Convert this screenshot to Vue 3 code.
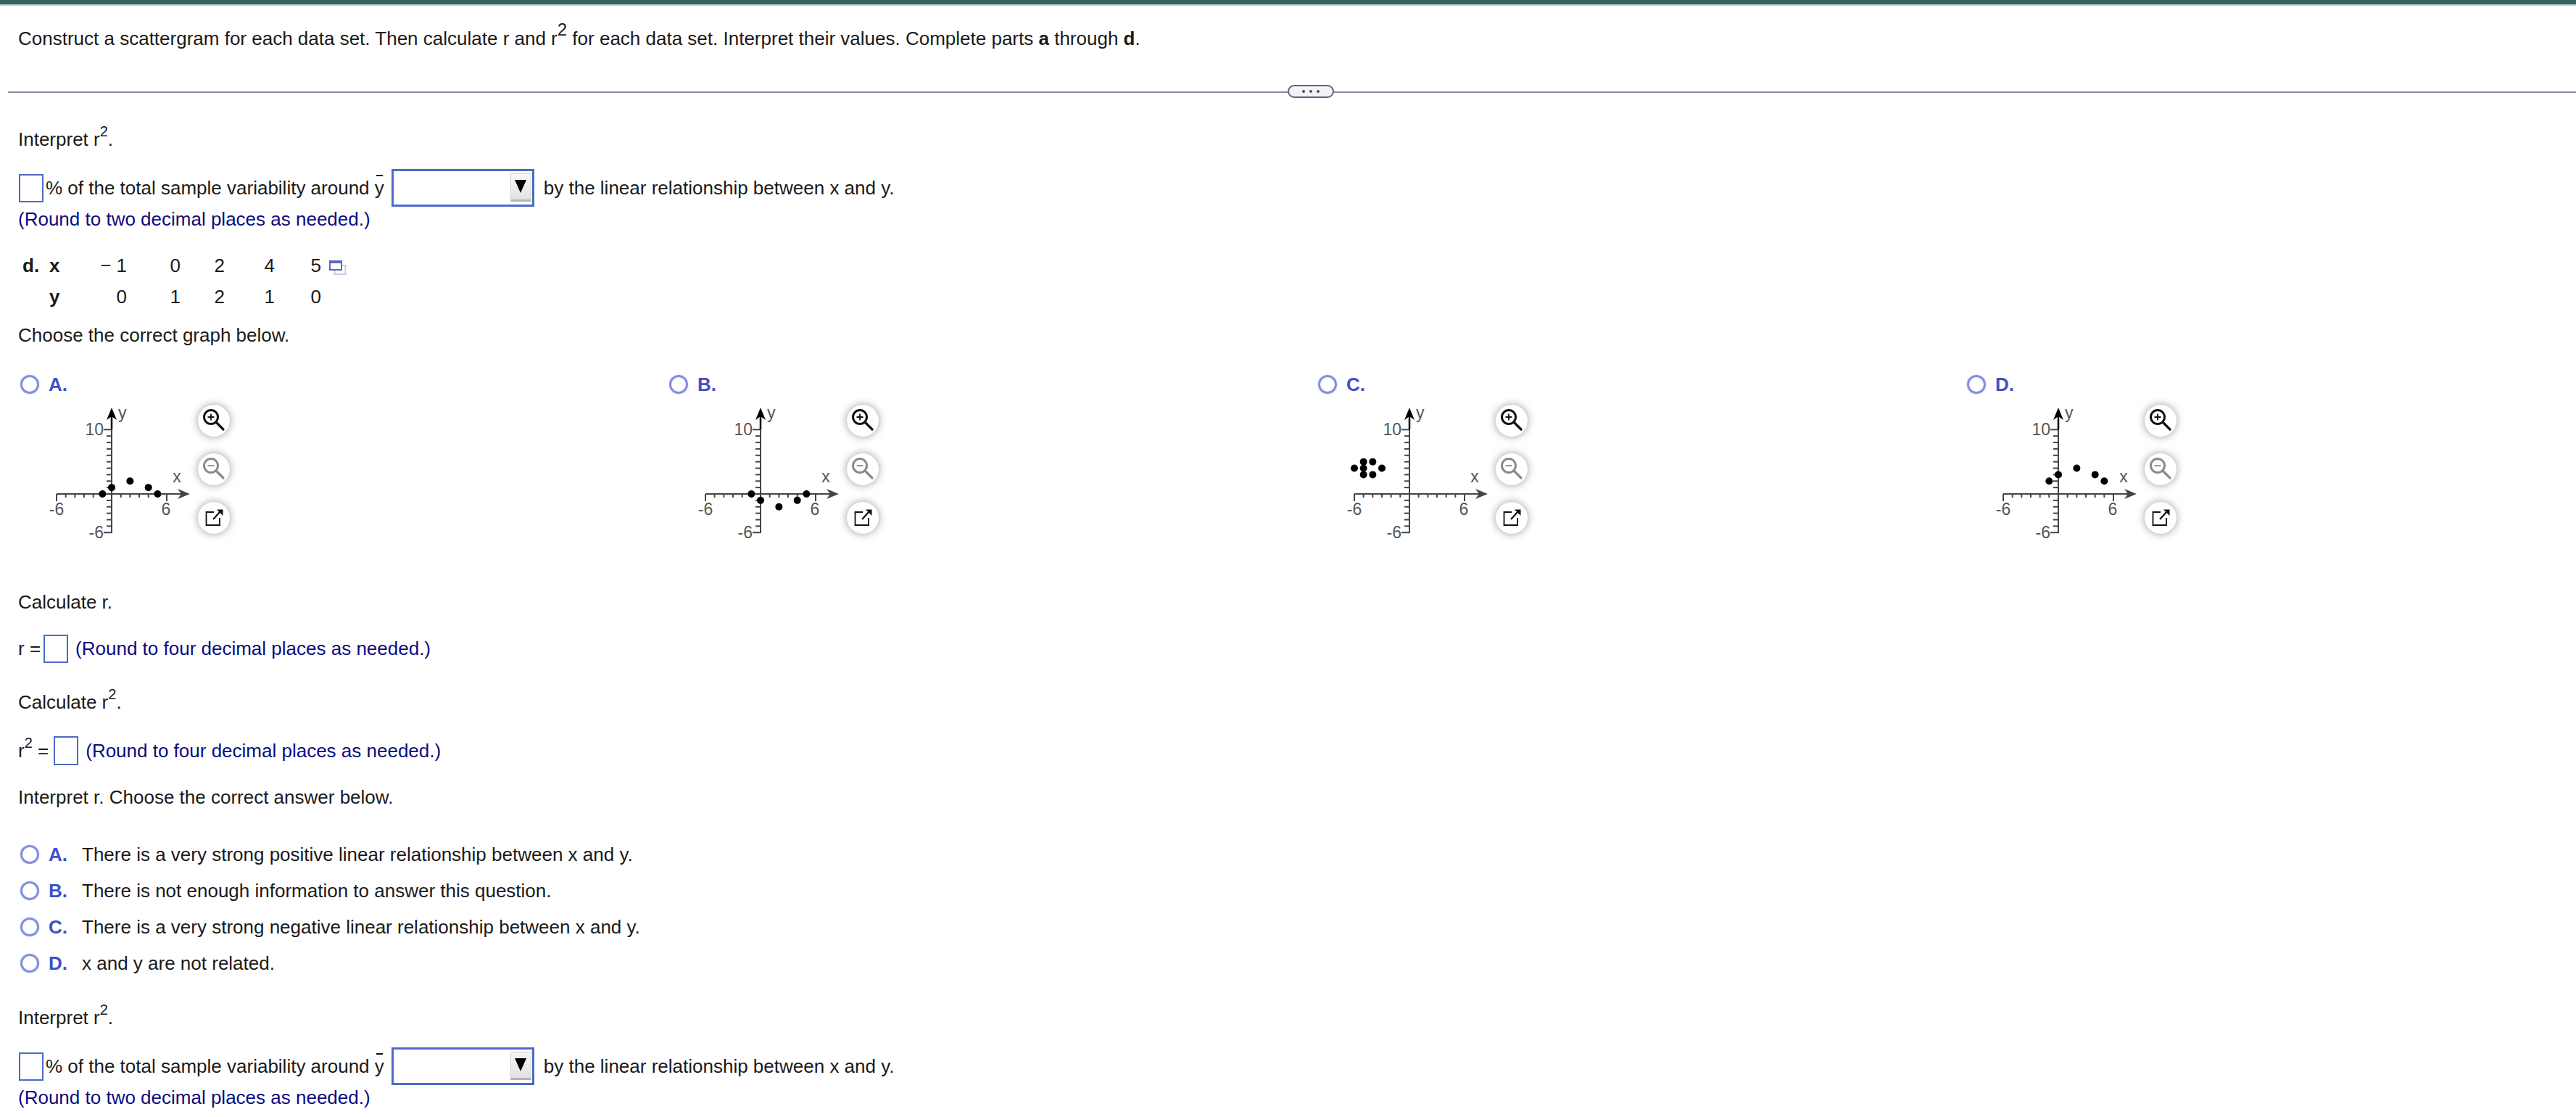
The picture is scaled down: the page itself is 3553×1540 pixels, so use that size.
<template>
  <div class="page">
    <div class="topbar"></div>
    <p class="line prompt">
      Construct a scattergram for each data set. Then calculate r and r<sup class="big">2</sup> for each data set. Interpret their values. Complete parts <b>a</b> through <b>d</b>.
    </p>
    <div class="rule">
      <div class="more"><i></i><i></i><i></i></div>
    </div>

    <div class="body">
      <p class="line interpret">Interpret r<sup>2</sup>.</p>
      <div class="fill-row">
        <input class="box" type="text" />
        <span class="after-box">% of the total sample variability around <span class="ybar">y</span></span>
        <div class="dropdown"><div class="drop-btn"><span class="tri"></span></div></div>
        <span>by the linear relationship between x and y.</span>
      </div>
      <p class="line hint">(Round to two decimal places as needed.)</p>

      <div class="data">
        <b class="part">d.</b>
        <b>x</b>
        <span class="num" v-for="v in xs" :key="'x' + v">{{ v }}</span>
        <svg class="copy" width="24" height="20" viewBox="0 0 24 20">
          <rect x="7.5" y="7" width="15" height="12" fill="#fff" stroke="#c6cbe6" stroke-width="2" />
          <rect x="1" y="1" width="16" height="12" fill="#fff" stroke="#5c6bb5" stroke-width="2" />
          <rect x="1" y="1" width="16" height="3" fill="#5c6bb5" />
        </svg>
        <span></span>
        <b>y</b>
        <span class="num" v-for="(v, i) in ys" :key="'y' + i">{{ v }}</span>
      </div>

      <p class="line choose">Choose the correct graph below.</p>
    </div>

    <div class="graphs">
      <div class="graph-col" v-for="g in graphs" :key="g.letter">
        <div class="graph-head">
          <span class="radio"></span>
          <b class="letter">{{ g.letter }}.</b>
        </div>
        <div class="graph-row">
          <svg class="plot" width="210" height="196" viewBox="0 -6 210 196">
            <g stroke="#444" stroke-width="2">
              <line v-for="t in xTicks" :key="'xt' + t" :x1="px(t)" y1="121" :x2="px(t)" :y2="t === -6 || t === 6 ? 131 : 126" />
              <line v-for="t in yTicks" :key="'yt' + t" x1="94" :y1="py(t)" :x2="t === 10 || t === -6 ? 83 : 87" :y2="py(t)" />
              <line x1="18" y1="121" x2="192" y2="121" />
              <line x1="94" y1="32" x2="94" y2="175" />
            </g>
            <line x1="94" y1="14" x2="94" y2="32" stroke="#000" stroke-width="2.5" />
            <path d="M94 2 L101 19 L94 14 L87 19 Z" fill="#000" />
            <path d="M202 121 L185 114 L190 121 L185 128 Z" fill="#444" />
            <text class="lbl" x="83" y="40" text-anchor="end">10</text>
            <text class="lbl" x="83" y="182" text-anchor="end">-6</text>
            <text class="lbl" x="18" y="150" text-anchor="middle">-6</text>
            <text class="lbl" x="169" y="150" text-anchor="middle">6</text>
            <text class="lbl" x="184" y="105" text-anchor="middle">x</text>
            <text class="lbl" x="103" y="17">y</text>
            <circle v-for="(p, i) in g.points" :key="i" :cx="px(p[0])" :cy="py(p[1])" r="5" fill="#000" />
          </svg>
          <div class="tools">
            <button class="tool">
              <svg width="44" height="44" viewBox="0 0 44 44" fill="none" stroke="#111">
                <circle cx="18" cy="17" r="9.5" stroke-width="3" />
                <path d="M25 24 L35 34" stroke-width="3.2" stroke-linecap="round" />
                <path d="M13.5 17 H22.5 M18 12.5 V21.5" stroke-width="1.8" />
              </svg>
            </button>
            <button class="tool">
              <svg width="44" height="44" viewBox="0 0 44 44" fill="none" stroke="#8a8a8a">
                <circle cx="18" cy="17" r="9.5" stroke-width="3" />
                <path d="M25 24 L35 34" stroke-width="3.2" stroke-linecap="round" />
                <path d="M13.5 17 H22.5" stroke-width="1.8" />
              </svg>
            </button>
            <button class="tool">
              <svg width="44" height="44" viewBox="0 0 44 44" fill="none" stroke="#111">
                <path d="M22 14 H11.5 V32 H30 V22" stroke-width="1.8" />
                <path d="M21 24 L31 13" stroke-width="2.2" />
                <path d="M26 10.5 H34.5 V19 Z" fill="#111" stroke="none" />
              </svg>
            </button>
          </div>
        </div>
      </div>
    </div>

    <div class="body">
      <p class="line calc-r">Calculate r.</p>
      <div class="answer first">
        <span>r =</span>
        <input class="box" type="text" />
        <span class="hint-inline">(Round to four decimal places as needed.)</span>
      </div>
      <p class="line calc-r2">Calculate r<sup>2</sup>.</p>
      <div class="answer second">
        <span>r<sup>2</sup> =</span>
        <input class="box tall" type="text" />
        <span class="hint-inline">(Round to four decimal places as needed.)</span>
      </div>
      <p class="line interp-r">Interpret r. Choose the correct answer below.</p>

      <div class="options">
        <div class="option" v-for="o in options" :key="o.letter">
          <span class="radio"></span>
          <b class="letter opt-letter">{{ o.letter }}.</b>
          <span>{{ o.text }}</span>
        </div>
      </div>

      <p class="line interpret last">Interpret r<sup>2</sup>.</p>
      <div class="fill-row">
        <input class="box" type="text" />
        <span class="after-box">% of the total sample variability around <span class="ybar">y</span></span>
        <div class="dropdown"><div class="drop-btn"><span class="tri"></span></div></div>
        <span>by the linear relationship between x and y.</span>
      </div>
      <p class="line hint">(Round to two decimal places as needed.)</p>
    </div>
  </div>
</template>

<script setup>
const xs = ["\u2212 1", "0", "2", "4", "5"];
const ys = ["0", "1", "2", "1", "0"];

const xTicks = [-6, -5, -4, -3, -2, -1, 1, 2, 3, 4, 5, 6];
const yTicks = [-6, -5, -4, -3, -2, -1, 1, 2, 3, 4, 5, 6, 7, 8, 9, 10];

// axis origin inside the plot svg
const px = (x) => 94 + x * 12.67;
const py = (y) => 121 - y * 8.87;

const graphs = [
  { letter: "A", points: [[-1, 0], [0, 1], [2, 2], [4, 1], [5, 0]] },
  { letter: "B", points: [[-1, 0], [0, -1], [2, -2], [4, -1], [5, 0]] },
  { letter: "C", points: [[-6, 4], [-5, 5], [-4, 5], [-5, 4], [-3, 4], [-5, 3], [-4, 3]] },
  { letter: "D", points: [[-1, 2], [0, 3], [2, 4], [4, 3], [5, 2]] },
];

const options = [
  { letter: "A", text: "There is a very strong positive linear relationship between x and y." },
  { letter: "B", text: "There is not enough information to answer this question." },
  { letter: "C", text: "There is a very strong negative linear relationship between x and y." },
  { letter: "D", text: "x and y are not related." },
];
</script>

<style scoped>
.page {
  font-family: "Liberation Sans", Arial, sans-serif;
  font-size: 26px;
  color: #1a1a1a;
  height: 1540px;
  overflow: hidden;
}

.topbar {
  height: 6px;
  background: #33635c;
  border-bottom: 2px solid #c9d3d1;
}

p {
  margin: 0;
}

.line {
  line-height: 30px;
  white-space: nowrap;
}

sup {
  font-size: 20px;
  line-height: 0;
  vertical-align: 13px;
}

sup.big {
  font-size: 24px;
  vertical-align: 13px;
}

.prompt {
  margin: 30px 0 0 25px;
}

.rule {
  position: relative;
  height: 2px;
  margin: 58px 0 0 11px;
  background: #8b8e9f;
}

.more {
  position: absolute;
  left: 1765px;
  top: -9px;
  width: 64px;
  height: 18px;
  box-sizing: border-box;
  border: 2.5px solid #5c6577;
  border-radius: 9px;
  background: #f2f3f6;
  display: flex;
  justify-content: center;
  align-items: center;
  gap: 6px;
}

.more i {
  width: 4px;
  height: 4px;
  border-radius: 50%;
  background: #4a4f5c;
}

.body {
  padding-left: 25px;
}

.interpret {
  margin-top: 49px;
}

.interpret.last {
  margin-top: 35px;
}

.fill-row {
  display: flex;
  align-items: center;
  height: 52px;
  margin-top: 26px;
  white-space: nowrap;
}

.box {
  display: block;
  box-sizing: border-box;
  width: 34px;
  height: 39px;
  margin: 0 0 0 1px;
  padding: 0;
  border: 2.5px solid #4a6cc8;
  background: #fff;
  border-radius: 0;
  outline: none;
}

.box.tall {
  height: 40px;
}

.after-box {
  margin-left: 3px;
}

.ybar {
  position: relative;
}

.ybar::before {
  content: "";
  position: absolute;
  left: 2px;
  top: -3px;
  width: 9px;
  height: 2.5px;
  background: #111;
}

.dropdown {
  box-sizing: border-box;
  width: 197px;
  height: 52px;
  margin: 0 13px 0 10px;
  border: 3px solid #4a6cc8;
  background: #fff;
  display: flex;
  justify-content: flex-end;
  padding: 3px 1px 4px 0;
}

.drop-btn {
  box-sizing: border-box;
  width: 29px;
  border: 1px solid #d0d0d0;
  border-bottom: 3px solid #b4b4b4;
  background: linear-gradient(#f7f7f7, #e2e2e2);
  display: flex;
  justify-content: center;
  padding-top: 8px;
}

.tri {
  width: 0;
  height: 0;
  border-left: 8px solid transparent;
  border-right: 8px solid transparent;
  border-top: 18px solid #000;
}

.hint,
.hint-inline {
  color: #0c0c80;
}

.hint {
  margin-top: 2px;
}

.data {
  display: grid;
  grid-template-columns: 37px 30px 77px 74px 61px 69px 64px 40px;
  grid-auto-rows: 43px;
  line-height: 43px;
  margin: 28px 0 0 6px;
  align-items: start;
}

.num {
  text-align: right;
}

.copy {
  margin: 14px 0 0 11px;
}

.choose {
  margin-top: 16px;
}

.graphs {
  display: grid;
  grid-template-columns: repeat(4, 895px);
  padding-left: 25px;
  margin-top: 38px;
}

.graph-head {
  display: flex;
  align-items: center;
  height: 30px;
  padding-left: 3px;
}

.radio {
  flex: none;
  box-sizing: border-box;
  width: 26px;
  height: 26px;
  border: 3px solid #7f90de;
  border-radius: 50%;
  box-shadow: 0 0 2px rgba(127, 144, 222, 0.6);
}

.letter {
  margin-left: 13px;
  color: #3f51c4;
}

.graph-row {
  display: flex;
  margin: 9px 0 0 35px;
}

.plot {
  display: block;
}

.lbl {
  font-size: 23px;
  fill: #555;
}

.tools {
  display: flex;
  flex-direction: column;
  gap: 23px;
  margin: 4px 0 0 3px;
}

.tool {
  display: block;
  width: 44px;
  height: 44px;
  padding: 0;
  border: 0;
  border-radius: 50%;
  background: #fff;
  box-shadow: 0 0 12px rgba(0, 0, 0, 0.4);
}

.tool svg {
  display: block;
}

.calc-r {
  margin-top: 65px;
}

.answer {
  display: flex;
  align-items: center;
  white-space: nowrap;
}

.answer.first {
  height: 39px;
  margin-top: 30px;
}

.answer.second {
  height: 40px;
  margin-top: 32px;
}

.answer .box {
  margin-left: 4px;
}

.answer.second .box {
  margin-left: 7px;
}

.hint-inline {
  margin-left: 10px;
}

.calc-r2 {
  margin-top: 39px;
}

.interp-r {
  margin-top: 29px;
}

.options {
  margin-top: 39px;
  padding-left: 3px;
}

.option {
  display: flex;
  align-items: center;
  height: 50px;
}

.opt-letter {
  width: 46px;
}
</style>

<style>
html,
body {
  background: #fff;
}
</style>
